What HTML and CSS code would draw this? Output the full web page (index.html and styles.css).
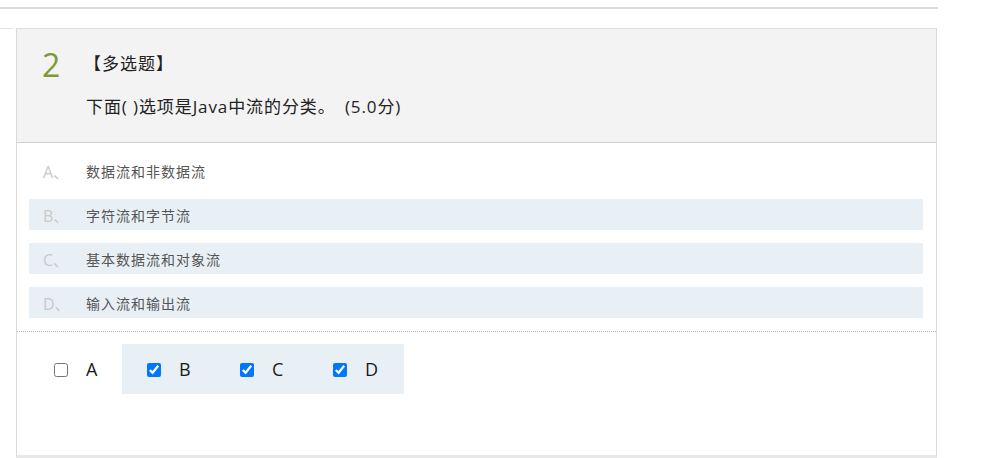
FILE: index.html
```html
<!DOCTYPE html>
<html lang="zh-CN">
<head>
<meta charset="utf-8">
<title>多选题</title>
<link rel="stylesheet" href="styles.css">
</head>
<body>
<div class="topbar"></div>
<div class="wrap">
  <div class="stub"></div>
  <div class="card">
    <div class="head">
      <div class="title-row">
        <span class="num">2</span>
        <span class="type">【多选题】</span>
      </div>
      <div class="question">下面( )选项是Java中流的分类。 <span class="score">(5.0分)</span></div>
    </div>
    <ul class="options">
      <li class="opt"><span class="letter">A、</span><span class="otext">数据流和非数据流</span></li>
      <li class="opt sel"><span class="letter">B、</span><span class="otext">字符流和字节流</span></li>
      <li class="opt sel"><span class="letter">C、</span><span class="otext">基本数据流和对象流</span></li>
      <li class="opt sel"><span class="letter">D、</span><span class="otext">输入流和输出流</span></li>
    </ul>
    <div class="answers">
      <label class="ans"><input type="checkbox"><span>A</span></label>
      <div class="ans-group">
        <label class="ans"><input type="checkbox" checked><span>B</span></label>
        <label class="ans"><input type="checkbox" checked><span>C</span></label>
        <label class="ans"><input type="checkbox" checked><span>D</span></label>
      </div>
    </div>
  </div>
</div>
</body>
</html>
```
FILE: styles.css
```css
* { box-sizing: border-box; }
html, body { margin: 0; padding: 0; background: #fff; }
body {
  font-family: "Open Sans", "Noto Sans CJK SC", sans-serif;
  color: #333;
  width: 986px;
  height: 458px;
  overflow: hidden;
}
.topbar {
  width: 938px;
  height: 9px;
  border-bottom: 2px solid #dcdcdc;
}
.wrap {
  display: flex;
  align-items: flex-start;
  margin-top: 19px;
}
.stub {
  width: 13px;
  border-top: 1px solid #e2e2e2;
  margin-right: 3px;
}
.card {
  width: 921px;
  border: 1px solid #d9d9d9;
  border-top: 1px solid #dedede;
  border-bottom: 3px solid #e8e8e8;
  background: #fff;
}
.head {
  background: #f3f3f3;
  border-bottom: 1px solid #d0d0d0;
  height: 114px;
  padding: 16px 0 0 0;
}
.title-row {
  display: flex;
  align-items: center;
  height: 40px;
}
.num {
  font-family: "Open Sans", "Noto Sans CJK SC", sans-serif;
  font-size: 32px;
  line-height: 40px;
  color: #7b9b36;
  width: 70px;
  padding-left: 25px;
}
.type {
  font-family: "Noto Sans CJK SC", sans-serif;
  font-size: 17px;
  letter-spacing: 1px;
  color: #222;
  margin-left: -3px;
  line-height: 20px;
  position: relative;
  top: -2px;
}
.question {
  font-family: "Open Sans", "Noto Sans CJK SC", sans-serif;
  font-size: 17px;
  letter-spacing: 0.9px;
  color: #222;
  line-height: 22px;
  margin-top: 11px;
  padding-left: 69px;
}
.score { margin-left: 4px; }
.options {
  list-style: none;
  margin: 0;
  padding: 12px 13px 0 12px;
  border-bottom: 1px dotted #b5b5b5;
}
.opt {
  display: flex;
  align-items: center;
  height: 31px;
  margin-bottom: 13px;
}
.opt.sel { background: #e8f0f6; }
.letter {
  width: 57px;
  padding-left: 14px;
  font-size: 16px;
  color: #c9c9c9;
  font-family: "Open Sans", "Noto Sans CJK SC", sans-serif;
}
.otext {
  font-family: "Noto Sans CJK SC", sans-serif;
  font-size: 14px;
  letter-spacing: 1px;
  color: #555;
}
.answers {
  display: flex;
  align-items: flex-start;
  padding: 12px 0 0 12px;
  height: 123px;
}
.ans-group {
  display: flex;
  align-items: center;
  height: 50px;
  background: #e8f0f6;
  padding-right: 3px;
}
.ans {
  display: flex;
  align-items: center;
  width: 93px;
  height: 50px;
  padding-left: 25px;
  font-size: 18px;
  color: #1a1a1a;
  font-family: "Open Sans", "Noto Sans CJK SC", sans-serif;
}
.ans input {
  width: 14px;
  height: 14px;
  margin: 0 18px 0 0;
  position: relative;
  top: 1px;
}
```
